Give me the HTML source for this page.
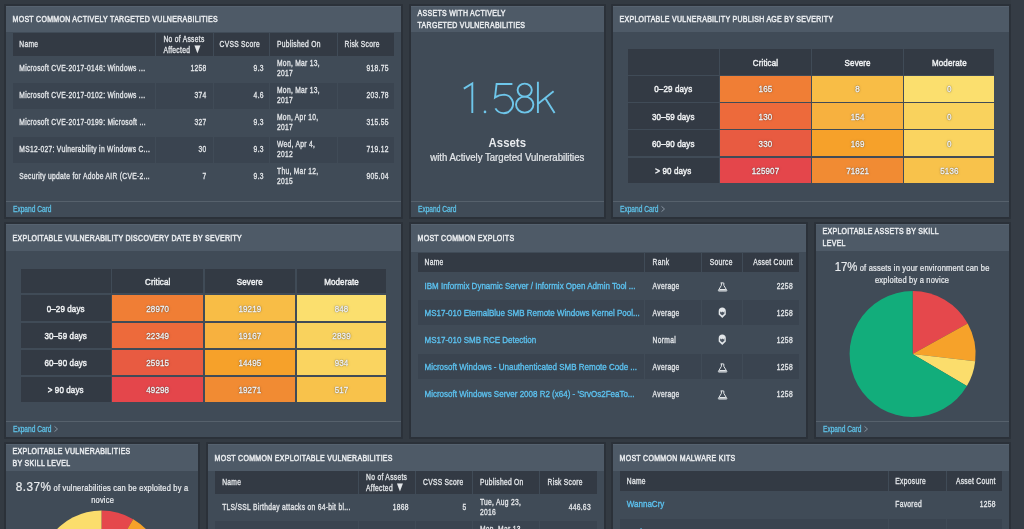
<!DOCTYPE html>
<html><head><meta charset="utf-8"><style>
html,body{margin:0;padding:0;}
body{width:1024px;height:529px;overflow:hidden;position:relative;background:#333a42;font-family:"Liberation Sans",sans-serif;}
#w{position:absolute;left:0;top:0;width:1024px;height:529px;overflow:hidden;background:#333a42;filter:blur(0.4px);}
#w>div{position:absolute;box-sizing:border-box;}
.t{white-space:nowrap;}
</style></head><body><div id="w">
<div style="left:1011px;top:0;width:13px;height:529px;background:#353c45"></div>
<div style="left:4px;top:4px;width:399px;height:215px;background:#2b3139;border-radius:1px"></div><div style="left:6px;top:6px;width:395px;height:211px;background:#404b57"></div><div style="left:6px;top:6px;width:395px;height:25.8px;background:#4e5a67"></div><div style="left:6px;top:6px;width:395px;height:1px;background:#56626f"></div><div class="t" style="left:12.5px;top:14.93px;font-size:7.0px;line-height:8.75px;font-weight:normal;color:#e8ebee;letter-spacing:0.3px;transform:scaleY(1.32);-webkit-text-stroke:0.4px #e8ebee;">MOST COMMON ACTIVELY TARGETED VULNERABILITIES</div><div style="left:6px;top:201px;width:395px;height:1px;background:#56616c"></div><div class="t" style="left:13px;top:206.18px;font-size:6.6px;line-height:8.25px;font-weight:normal;color:#5ec0e6;transform:scaleY(1.25);-webkit-text-stroke:0.25px #5ec0e6;">Expand Card</div><div style="left:409px;top:4px;width:197px;height:215px;background:#2b3139;border-radius:1px"></div><div style="left:411px;top:6px;width:193px;height:211px;background:#404b57"></div><div style="left:411px;top:6px;width:193px;height:25.8px;background:#4e5a67"></div><div style="left:411px;top:6px;width:193px;height:1px;background:#56626f"></div><div class="t" style="left:417.5px;top:9.32px;font-size:7.0px;line-height:8.75px;font-weight:normal;color:#e8ebee;letter-spacing:0.3px;transform:scaleY(1.32);-webkit-text-stroke:0.4px #e8ebee;">ASSETS WITH ACTIVELY</div><div class="t" style="left:417.5px;top:20.52px;font-size:7.0px;line-height:8.75px;font-weight:normal;color:#e8ebee;letter-spacing:0.3px;transform:scaleY(1.32);-webkit-text-stroke:0.4px #e8ebee;">TARGETED VULNERABILITIES</div><div style="left:411px;top:201px;width:193px;height:1px;background:#56616c"></div><div class="t" style="left:418px;top:206.18px;font-size:6.6px;line-height:8.25px;font-weight:normal;color:#5ec0e6;transform:scaleY(1.25);-webkit-text-stroke:0.25px #5ec0e6;">Expand Card</div><div style="left:611px;top:4px;width:400px;height:215px;background:#2b3139;border-radius:1px"></div><div style="left:613px;top:6px;width:396px;height:211px;background:#404b57"></div><div style="left:613px;top:6px;width:396px;height:25.8px;background:#4e5a67"></div><div style="left:613px;top:6px;width:396px;height:1px;background:#56626f"></div><div class="t" style="left:619.5px;top:14.93px;font-size:7.0px;line-height:8.75px;font-weight:normal;color:#e8ebee;letter-spacing:0.3px;transform:scaleY(1.32);-webkit-text-stroke:0.4px #e8ebee;">EXPLOITABLE VULNERABILITY PUBLISH AGE BY SEVERITY</div><div style="left:613px;top:201px;width:396px;height:1px;background:#56616c"></div><div class="t" style="left:620px;top:206.18px;font-size:6.6px;line-height:8.25px;font-weight:normal;color:#5ec0e6;transform:scaleY(1.25);-webkit-text-stroke:0.25px #5ec0e6;">Expand Card</div><svg width="1024" height="529" style="position:absolute;left:0;top:0"><path d="M661.5,206.4 L664.5,209 L661.5,211.6" fill="none" stroke="#8d9aa6" stroke-width="0.9"/></svg><div style="left:4px;top:222px;width:399px;height:217px;background:#2b3139;border-radius:1px"></div><div style="left:6px;top:224px;width:395px;height:213px;background:#404b57"></div><div style="left:6px;top:224px;width:395px;height:27px;background:#4e5a67"></div><div style="left:6px;top:224px;width:395px;height:1px;background:#56626f"></div><div class="t" style="left:12.5px;top:234.43px;font-size:7.0px;line-height:8.75px;font-weight:normal;color:#e8ebee;letter-spacing:0.3px;transform:scaleY(1.32);-webkit-text-stroke:0.4px #e8ebee;">EXPLOITABLE VULNERABILITY DISCOVERY DATE BY SEVERITY</div><div style="left:6px;top:421px;width:395px;height:1px;background:#56616c"></div><div class="t" style="left:13px;top:426.18px;font-size:6.6px;line-height:8.25px;font-weight:normal;color:#5ec0e6;transform:scaleY(1.25);-webkit-text-stroke:0.25px #5ec0e6;">Expand Card</div><svg width="1024" height="529" style="position:absolute;left:0;top:0"><path d="M54.5,426.4 L57.5,429 L54.5,431.6" fill="none" stroke="#8d9aa6" stroke-width="0.9"/></svg><div style="left:409px;top:222px;width:399px;height:217px;background:#2b3139;border-radius:1px"></div><div style="left:411px;top:224px;width:395px;height:213px;background:#404b57"></div><div style="left:411px;top:224px;width:395px;height:28px;background:#4e5a67"></div><div style="left:411px;top:224px;width:395px;height:1px;background:#56626f"></div><div class="t" style="left:417.5px;top:233.62px;font-size:7.0px;line-height:8.75px;font-weight:normal;color:#e8ebee;letter-spacing:0.3px;transform:scaleY(1.32);-webkit-text-stroke:0.4px #e8ebee;">MOST COMMON EXPLOITS</div><div style="left:814px;top:222px;width:197px;height:217px;background:#2b3139;border-radius:1px"></div><div style="left:816px;top:224px;width:193px;height:213px;background:#404b57"></div><div style="left:816px;top:224px;width:193px;height:27px;background:#4e5a67"></div><div style="left:816px;top:224px;width:193px;height:1px;background:#56626f"></div><div class="t" style="left:822.5px;top:227.32px;font-size:7.0px;line-height:8.75px;font-weight:normal;color:#e8ebee;letter-spacing:0.3px;transform:scaleY(1.32);-webkit-text-stroke:0.4px #e8ebee;">EXPLOITABLE ASSETS BY SKILL</div><div class="t" style="left:822.5px;top:238.53px;font-size:7.0px;line-height:8.75px;font-weight:normal;color:#e8ebee;letter-spacing:0.3px;transform:scaleY(1.32);-webkit-text-stroke:0.4px #e8ebee;">LEVEL</div><div style="left:816px;top:421px;width:193px;height:1px;background:#56616c"></div><div class="t" style="left:823px;top:426.18px;font-size:6.6px;line-height:8.25px;font-weight:normal;color:#5ec0e6;transform:scaleY(1.25);-webkit-text-stroke:0.25px #5ec0e6;">Expand Card</div><svg width="1024" height="529" style="position:absolute;left:0;top:0"><path d="M864.5,426.4 L867.5,429 L864.5,431.6" fill="none" stroke="#8d9aa6" stroke-width="0.9"/></svg><div style="left:4px;top:442px;width:196px;height:120px;background:#2b3139;border-radius:1px"></div><div style="left:6px;top:444px;width:192px;height:116px;background:#404b57"></div><div style="left:6px;top:444px;width:192px;height:27px;background:#4e5a67"></div><div style="left:6px;top:444px;width:192px;height:1px;background:#56626f"></div><div class="t" style="left:12.5px;top:447.32px;font-size:7.0px;line-height:8.75px;font-weight:normal;color:#e8ebee;letter-spacing:0.3px;transform:scaleY(1.32);-webkit-text-stroke:0.4px #e8ebee;">EXPLOITABLE VULNERABILITIES</div><div class="t" style="left:12.5px;top:458.52px;font-size:7.0px;line-height:8.75px;font-weight:normal;color:#e8ebee;letter-spacing:0.3px;transform:scaleY(1.32);-webkit-text-stroke:0.4px #e8ebee;">BY SKILL LEVEL</div><div style="left:206px;top:442px;width:400px;height:120px;background:#2b3139;border-radius:1px"></div><div style="left:208px;top:444px;width:396px;height:116px;background:#404b57"></div><div style="left:208px;top:444px;width:396px;height:27px;background:#4e5a67"></div><div style="left:208px;top:444px;width:396px;height:1px;background:#56626f"></div><div class="t" style="left:214.5px;top:454.43px;font-size:7.0px;line-height:8.75px;font-weight:normal;color:#e8ebee;letter-spacing:0.3px;transform:scaleY(1.32);-webkit-text-stroke:0.4px #e8ebee;">MOST COMMON EXPLOITABLE VULNERABILITIES</div><div style="left:611px;top:442px;width:400px;height:120px;background:#2b3139;border-radius:1px"></div><div style="left:613px;top:444px;width:396px;height:116px;background:#404b57"></div><div style="left:613px;top:444px;width:396px;height:27px;background:#4e5a67"></div><div style="left:613px;top:444px;width:396px;height:1px;background:#56626f"></div><div class="t" style="left:619.5px;top:454.43px;font-size:7.0px;line-height:8.75px;font-weight:normal;color:#e8ebee;letter-spacing:0.3px;transform:scaleY(1.32);-webkit-text-stroke:0.4px #e8ebee;">MOST COMMON MALWARE KITS</div><div style="left:12.5px;top:33px;width:142.5px;height:22.5px;background:#333a44"></div><div style="left:156px;top:33px;width:57px;height:22.5px;background:#333a44"></div><div style="left:214px;top:33px;width:54.5px;height:22.5px;background:#333a44"></div><div style="left:269.5px;top:33px;width:67.0px;height:22.5px;background:#333a44"></div><div style="left:337.5px;top:33px;width:56.5px;height:22.5px;background:#333a44"></div><div style="left:12.5px;top:83.3px;width:142.5px;height:25.4px;background:#3a4450"></div><div style="left:156px;top:83.3px;width:57px;height:25.4px;background:#3a4450"></div><div style="left:214px;top:83.3px;width:54.5px;height:25.4px;background:#3a4450"></div><div style="left:269.5px;top:83.3px;width:67.0px;height:25.4px;background:#3a4450"></div><div style="left:337.5px;top:83.3px;width:56.5px;height:25.4px;background:#3a4450"></div><div style="left:12.5px;top:137.3px;width:142.5px;height:25.4px;background:#3a4450"></div><div style="left:156px;top:137.3px;width:57px;height:25.4px;background:#3a4450"></div><div style="left:214px;top:137.3px;width:54.5px;height:25.4px;background:#3a4450"></div><div style="left:269.5px;top:137.3px;width:67.0px;height:25.4px;background:#3a4450"></div><div style="left:337.5px;top:137.3px;width:56.5px;height:25.4px;background:#3a4450"></div><div class="t" style="left:19.3px;top:40.11px;font-size:6.7px;line-height:8.38px;font-weight:normal;color:#e4e7ea;letter-spacing:0.3px;transform:scaleY(1.3);-webkit-text-stroke:0.25px #e4e7ea;">Name</div><div class="t" style="left:163.4px;top:35.01px;font-size:6.7px;line-height:8.38px;font-weight:normal;color:#e4e7ea;letter-spacing:0.3px;transform:scaleY(1.3);-webkit-text-stroke:0.25px #e4e7ea;">No of Assets</div><div class="t" style="left:163.4px;top:45.01px;font-size:6.7px;line-height:8.38px;font-weight:normal;color:#e4e7ea;letter-spacing:0.3px;transform:scaleY(1.3);-webkit-text-stroke:0.25px #e4e7ea;">Affected <span style="font-size:10px;-webkit-text-stroke:0">&#9660;</span></div><div class="t" style="left:219.5px;top:40.11px;font-size:6.7px;line-height:8.38px;font-weight:normal;color:#e4e7ea;letter-spacing:0.3px;transform:scaleY(1.3);-webkit-text-stroke:0.25px #e4e7ea;">CVSS Score</div><div class="t" style="left:277px;top:40.11px;font-size:6.7px;line-height:8.38px;font-weight:normal;color:#e4e7ea;letter-spacing:0.3px;transform:scaleY(1.3);-webkit-text-stroke:0.25px #e4e7ea;">Published On</div><div class="t" style="left:344.5px;top:40.11px;font-size:6.7px;line-height:8.38px;font-weight:normal;color:#e4e7ea;letter-spacing:0.3px;transform:scaleY(1.3);-webkit-text-stroke:0.25px #e4e7ea;">Risk Score</div><div class="t" style="left:19.3px;top:64.41px;font-size:6.7px;line-height:8.38px;font-weight:normal;color:#e4e7ea;letter-spacing:0.3px;transform:scaleY(1.3);-webkit-text-stroke:0.25px #e4e7ea;">Microsoft CVE-2017-0146: Windows ...</div><div class="t" style="right:817.50px;text-align:right;top:64.41px;font-size:6.7px;line-height:8.38px;font-weight:normal;color:#e4e7ea;letter-spacing:0.3px;transform:scaleY(1.3);-webkit-text-stroke:0.25px #e4e7ea;">1258</div><div class="t" style="right:760.20px;text-align:right;top:64.41px;font-size:6.7px;line-height:8.38px;font-weight:normal;color:#e4e7ea;letter-spacing:0.3px;transform:scaleY(1.3);-webkit-text-stroke:0.25px #e4e7ea;">9.3</div><div class="t" style="left:277px;top:59.41px;font-size:6.7px;line-height:8.38px;font-weight:normal;color:#e4e7ea;letter-spacing:0.3px;transform:scaleY(1.3);-webkit-text-stroke:0.25px #e4e7ea;">Mon, Mar 13,</div><div class="t" style="left:277px;top:69.41px;font-size:6.7px;line-height:8.38px;font-weight:normal;color:#e4e7ea;letter-spacing:0.3px;transform:scaleY(1.3);-webkit-text-stroke:0.25px #e4e7ea;">2017</div><div class="t" style="right:635.20px;text-align:right;top:64.41px;font-size:6.7px;line-height:8.38px;font-weight:normal;color:#e4e7ea;letter-spacing:0.3px;transform:scaleY(1.3);-webkit-text-stroke:0.25px #e4e7ea;">918.75</div><div class="t" style="left:19.3px;top:91.41px;font-size:6.7px;line-height:8.38px;font-weight:normal;color:#e4e7ea;letter-spacing:0.3px;transform:scaleY(1.3);-webkit-text-stroke:0.25px #e4e7ea;">Microsoft CVE-2017-0102: Windows ...</div><div class="t" style="right:817.50px;text-align:right;top:91.41px;font-size:6.7px;line-height:8.38px;font-weight:normal;color:#e4e7ea;letter-spacing:0.3px;transform:scaleY(1.3);-webkit-text-stroke:0.25px #e4e7ea;">374</div><div class="t" style="right:760.20px;text-align:right;top:91.41px;font-size:6.7px;line-height:8.38px;font-weight:normal;color:#e4e7ea;letter-spacing:0.3px;transform:scaleY(1.3);-webkit-text-stroke:0.25px #e4e7ea;">4.6</div><div class="t" style="left:277px;top:86.41px;font-size:6.7px;line-height:8.38px;font-weight:normal;color:#e4e7ea;letter-spacing:0.3px;transform:scaleY(1.3);-webkit-text-stroke:0.25px #e4e7ea;">Mon, Mar 13,</div><div class="t" style="left:277px;top:96.41px;font-size:6.7px;line-height:8.38px;font-weight:normal;color:#e4e7ea;letter-spacing:0.3px;transform:scaleY(1.3);-webkit-text-stroke:0.25px #e4e7ea;">2017</div><div class="t" style="right:635.20px;text-align:right;top:91.41px;font-size:6.7px;line-height:8.38px;font-weight:normal;color:#e4e7ea;letter-spacing:0.3px;transform:scaleY(1.3);-webkit-text-stroke:0.25px #e4e7ea;">203.78</div><div class="t" style="left:19.3px;top:118.41px;font-size:6.7px;line-height:8.38px;font-weight:normal;color:#e4e7ea;letter-spacing:0.3px;transform:scaleY(1.3);-webkit-text-stroke:0.25px #e4e7ea;">Microsoft CVE-2017-0199: Microsoft ...</div><div class="t" style="right:817.50px;text-align:right;top:118.41px;font-size:6.7px;line-height:8.38px;font-weight:normal;color:#e4e7ea;letter-spacing:0.3px;transform:scaleY(1.3);-webkit-text-stroke:0.25px #e4e7ea;">327</div><div class="t" style="right:760.20px;text-align:right;top:118.41px;font-size:6.7px;line-height:8.38px;font-weight:normal;color:#e4e7ea;letter-spacing:0.3px;transform:scaleY(1.3);-webkit-text-stroke:0.25px #e4e7ea;">9.3</div><div class="t" style="left:277px;top:113.41px;font-size:6.7px;line-height:8.38px;font-weight:normal;color:#e4e7ea;letter-spacing:0.3px;transform:scaleY(1.3);-webkit-text-stroke:0.25px #e4e7ea;">Mon, Apr 10,</div><div class="t" style="left:277px;top:123.41px;font-size:6.7px;line-height:8.38px;font-weight:normal;color:#e4e7ea;letter-spacing:0.3px;transform:scaleY(1.3);-webkit-text-stroke:0.25px #e4e7ea;">2017</div><div class="t" style="right:635.20px;text-align:right;top:118.41px;font-size:6.7px;line-height:8.38px;font-weight:normal;color:#e4e7ea;letter-spacing:0.3px;transform:scaleY(1.3);-webkit-text-stroke:0.25px #e4e7ea;">315.55</div><div class="t" style="left:19.3px;top:145.41px;font-size:6.7px;line-height:8.38px;font-weight:normal;color:#e4e7ea;letter-spacing:0.3px;transform:scaleY(1.3);-webkit-text-stroke:0.25px #e4e7ea;">MS12-027: Vulnerability in Windows C...</div><div class="t" style="right:817.50px;text-align:right;top:145.41px;font-size:6.7px;line-height:8.38px;font-weight:normal;color:#e4e7ea;letter-spacing:0.3px;transform:scaleY(1.3);-webkit-text-stroke:0.25px #e4e7ea;">30</div><div class="t" style="right:760.20px;text-align:right;top:145.41px;font-size:6.7px;line-height:8.38px;font-weight:normal;color:#e4e7ea;letter-spacing:0.3px;transform:scaleY(1.3);-webkit-text-stroke:0.25px #e4e7ea;">9.3</div><div class="t" style="left:277px;top:140.41px;font-size:6.7px;line-height:8.38px;font-weight:normal;color:#e4e7ea;letter-spacing:0.3px;transform:scaleY(1.3);-webkit-text-stroke:0.25px #e4e7ea;">Wed, Apr 4,</div><div class="t" style="left:277px;top:150.41px;font-size:6.7px;line-height:8.38px;font-weight:normal;color:#e4e7ea;letter-spacing:0.3px;transform:scaleY(1.3);-webkit-text-stroke:0.25px #e4e7ea;">2012</div><div class="t" style="right:635.20px;text-align:right;top:145.41px;font-size:6.7px;line-height:8.38px;font-weight:normal;color:#e4e7ea;letter-spacing:0.3px;transform:scaleY(1.3);-webkit-text-stroke:0.25px #e4e7ea;">719.12</div><div class="t" style="left:19.3px;top:172.41px;font-size:6.7px;line-height:8.38px;font-weight:normal;color:#e4e7ea;letter-spacing:0.3px;transform:scaleY(1.3);-webkit-text-stroke:0.25px #e4e7ea;">Security update for Adobe AIR (CVE-2...</div><div class="t" style="right:817.50px;text-align:right;top:172.41px;font-size:6.7px;line-height:8.38px;font-weight:normal;color:#e4e7ea;letter-spacing:0.3px;transform:scaleY(1.3);-webkit-text-stroke:0.25px #e4e7ea;">7</div><div class="t" style="right:760.20px;text-align:right;top:172.41px;font-size:6.7px;line-height:8.38px;font-weight:normal;color:#e4e7ea;letter-spacing:0.3px;transform:scaleY(1.3);-webkit-text-stroke:0.25px #e4e7ea;">9.3</div><div class="t" style="left:277px;top:167.41px;font-size:6.7px;line-height:8.38px;font-weight:normal;color:#e4e7ea;letter-spacing:0.3px;transform:scaleY(1.3);-webkit-text-stroke:0.25px #e4e7ea;">Thu, Mar 12,</div><div class="t" style="left:277px;top:177.41px;font-size:6.7px;line-height:8.38px;font-weight:normal;color:#e4e7ea;letter-spacing:0.3px;transform:scaleY(1.3);-webkit-text-stroke:0.25px #e4e7ea;">2015</div><div class="t" style="right:635.20px;text-align:right;top:172.41px;font-size:6.7px;line-height:8.38px;font-weight:normal;color:#e4e7ea;letter-spacing:0.3px;transform:scaleY(1.3);-webkit-text-stroke:0.25px #e4e7ea;">905.04</div><svg width="1024" height="529" style="position:absolute;left:0;top:0" fill="none" stroke="#6ec6ea" stroke-width="1.9" stroke-linecap="butt"><path d="M463.8,88.6 L472.3,83.4 V113.1"/><circle cx="485" cy="111.9" r="1.3" fill="#6ec6ea" stroke="none"/><path d="M512.4,84 H496.6 L495,97.4 Q499,94.6 504.3,94.6 A9.4,9.3 0 1 1 495.4,108.4"/><ellipse cx="524.7" cy="90.1" rx="7.1" ry="6.5"/><ellipse cx="524.7" cy="104.6" rx="8.7" ry="8"/><path d="M537.9,81.7 V113.1 M553.6,91.2 L538.4,103.6 M545.0,97.8 L554.6,113.1"/></svg><div class="t" style="left:357.30px;width:300px;text-align:center;top:136.38px;font-size:11.4px;line-height:14.25px;font-weight:bold;color:#e8ebee;transform:scaleY(1.05);">Assets</div><div class="t" style="left:357.30px;width:300px;text-align:center;top:152.40px;font-size:9.6px;line-height:12.00px;font-weight:normal;color:#e4e7ea;transform:scaleY(1.08);-webkit-text-stroke:0.2px #e4e7ea;">with Actively Targeted Vulnerabilities</div><div style="left:628px;top:48.5px;width:90.5px;height:26.1px;background:#333a44"></div><div style="left:720.1px;top:48.5px;width:90.69999999999996px;height:26.1px;background:#333a44"></div><div class="t" style="left:615.51px;width:300px;text-align:center;top:58.75px;font-size:8.0px;line-height:10.00px;font-weight:normal;color:#eef0f2;letter-spacing:0.12px;transform:scaleY(1.2);-webkit-text-stroke:0.4px #eef0f2;">Critical</div><div style="left:812.4px;top:48.5px;width:90.4px;height:26.1px;background:#333a44"></div><div class="t" style="left:707.66px;width:300px;text-align:center;top:58.75px;font-size:8.0px;line-height:10.00px;font-weight:normal;color:#eef0f2;letter-spacing:0.12px;transform:scaleY(1.2);-webkit-text-stroke:0.4px #eef0f2;">Severe</div><div style="left:904.4px;top:48.5px;width:89.9px;height:26.1px;background:#333a44"></div><div class="t" style="left:799.41px;width:300px;text-align:center;top:58.75px;font-size:8.0px;line-height:10.00px;font-weight:normal;color:#eef0f2;letter-spacing:0.12px;transform:scaleY(1.2);-webkit-text-stroke:0.4px #eef0f2;">Moderate</div><div style="left:628px;top:76.0px;width:90.5px;height:25.5px;background:#333a44"></div><div class="t" style="left:523.31px;width:300px;text-align:center;top:85.35px;font-size:8.0px;line-height:10.00px;font-weight:normal;color:#eef0f2;letter-spacing:0.12px;transform:scaleY(1.2);-webkit-text-stroke:0.4px #eef0f2;">0–29 days</div><div style="left:720.1px;top:76.0px;width:90.69999999999996px;height:25.5px;background:#f07e35"></div><div class="t" style="left:615.52px;width:300px;text-align:center;top:85.35px;font-size:8.0px;line-height:10.00px;font-weight:normal;color:#f7f7f7;letter-spacing:0.15px;text-shadow:0 0 1px rgba(30,30,30,.9),0 0 2px rgba(60,60,60,.6);transform:scaleY(1.2);-webkit-text-stroke:0.25px #f7f7f7;">165</div><div style="left:812.4px;top:76.0px;width:90.4px;height:25.5px;background:#f8bd46"></div><div class="t" style="left:707.67px;width:300px;text-align:center;top:85.35px;font-size:8.0px;line-height:10.00px;font-weight:normal;color:#f7f7f7;letter-spacing:0.15px;text-shadow:0 0 1px rgba(30,30,30,.9),0 0 2px rgba(60,60,60,.6);transform:scaleY(1.2);-webkit-text-stroke:0.25px #f7f7f7;">8</div><div style="left:904.4px;top:76.0px;width:89.9px;height:25.5px;background:#fbdf6e"></div><div class="t" style="left:799.42px;width:300px;text-align:center;top:85.35px;font-size:8.0px;line-height:10.00px;font-weight:normal;color:#f7f7f7;letter-spacing:0.15px;text-shadow:0 0 1px rgba(30,30,30,.9),0 0 2px rgba(60,60,60,.6);transform:scaleY(1.2);-webkit-text-stroke:0.25px #f7f7f7;">0</div><div style="left:628px;top:103.2px;width:90.5px;height:25.5px;background:#333a44"></div><div class="t" style="left:523.31px;width:300px;text-align:center;top:112.55px;font-size:8.0px;line-height:10.00px;font-weight:normal;color:#eef0f2;letter-spacing:0.12px;transform:scaleY(1.2);-webkit-text-stroke:0.4px #eef0f2;">30–59 days</div><div style="left:720.1px;top:103.2px;width:90.69999999999996px;height:25.5px;background:#ed6a3b"></div><div class="t" style="left:615.52px;width:300px;text-align:center;top:112.55px;font-size:8.0px;line-height:10.00px;font-weight:normal;color:#f7f7f7;letter-spacing:0.15px;text-shadow:0 0 1px rgba(30,30,30,.9),0 0 2px rgba(60,60,60,.6);transform:scaleY(1.2);-webkit-text-stroke:0.25px #f7f7f7;">130</div><div style="left:812.4px;top:103.2px;width:90.4px;height:25.5px;background:#f7b13f"></div><div class="t" style="left:707.67px;width:300px;text-align:center;top:112.55px;font-size:8.0px;line-height:10.00px;font-weight:normal;color:#f7f7f7;letter-spacing:0.15px;text-shadow:0 0 1px rgba(30,30,30,.9),0 0 2px rgba(60,60,60,.6);transform:scaleY(1.2);-webkit-text-stroke:0.25px #f7f7f7;">154</div><div style="left:904.4px;top:103.2px;width:89.9px;height:25.5px;background:#f9d25d"></div><div class="t" style="left:799.42px;width:300px;text-align:center;top:112.55px;font-size:8.0px;line-height:10.00px;font-weight:normal;color:#f7f7f7;letter-spacing:0.15px;text-shadow:0 0 1px rgba(30,30,30,.9),0 0 2px rgba(60,60,60,.6);transform:scaleY(1.2);-webkit-text-stroke:0.25px #f7f7f7;">0</div><div style="left:628px;top:130.4px;width:90.5px;height:25.5px;background:#333a44"></div><div class="t" style="left:523.31px;width:300px;text-align:center;top:139.75px;font-size:8.0px;line-height:10.00px;font-weight:normal;color:#eef0f2;letter-spacing:0.12px;transform:scaleY(1.2);-webkit-text-stroke:0.4px #eef0f2;">60–90 days</div><div style="left:720.1px;top:130.4px;width:90.69999999999996px;height:25.5px;background:#e85b41"></div><div class="t" style="left:615.52px;width:300px;text-align:center;top:139.75px;font-size:8.0px;line-height:10.00px;font-weight:normal;color:#f7f7f7;letter-spacing:0.15px;text-shadow:0 0 1px rgba(30,30,30,.9),0 0 2px rgba(60,60,60,.6);transform:scaleY(1.2);-webkit-text-stroke:0.25px #f7f7f7;">330</div><div style="left:812.4px;top:130.4px;width:90.4px;height:25.5px;background:#f6a12a"></div><div class="t" style="left:707.67px;width:300px;text-align:center;top:139.75px;font-size:8.0px;line-height:10.00px;font-weight:normal;color:#f7f7f7;letter-spacing:0.15px;text-shadow:0 0 1px rgba(30,30,30,.9),0 0 2px rgba(60,60,60,.6);transform:scaleY(1.2);-webkit-text-stroke:0.25px #f7f7f7;">169</div><div style="left:904.4px;top:130.4px;width:89.9px;height:25.5px;background:#fad460"></div><div class="t" style="left:799.42px;width:300px;text-align:center;top:139.75px;font-size:8.0px;line-height:10.00px;font-weight:normal;color:#f7f7f7;letter-spacing:0.15px;text-shadow:0 0 1px rgba(30,30,30,.9),0 0 2px rgba(60,60,60,.6);transform:scaleY(1.2);-webkit-text-stroke:0.25px #f7f7f7;">0</div><div style="left:628px;top:157.6px;width:90.5px;height:25.5px;background:#333a44"></div><div class="t" style="left:523.31px;width:300px;text-align:center;top:166.95px;font-size:8.0px;line-height:10.00px;font-weight:normal;color:#eef0f2;letter-spacing:0.12px;transform:scaleY(1.2);-webkit-text-stroke:0.4px #eef0f2;">&gt; 90 days</div><div style="left:720.1px;top:157.6px;width:90.69999999999996px;height:25.5px;background:#e4464b"></div><div class="t" style="left:615.52px;width:300px;text-align:center;top:166.95px;font-size:8.0px;line-height:10.00px;font-weight:normal;color:#f7f7f7;letter-spacing:0.15px;text-shadow:0 0 1px rgba(30,30,30,.9),0 0 2px rgba(60,60,60,.6);transform:scaleY(1.2);-webkit-text-stroke:0.25px #f7f7f7;">125907</div><div style="left:812.4px;top:157.6px;width:90.4px;height:25.5px;background:#f18b33"></div><div class="t" style="left:707.67px;width:300px;text-align:center;top:166.95px;font-size:8.0px;line-height:10.00px;font-weight:normal;color:#f7f7f7;letter-spacing:0.15px;text-shadow:0 0 1px rgba(30,30,30,.9),0 0 2px rgba(60,60,60,.6);transform:scaleY(1.2);-webkit-text-stroke:0.25px #f7f7f7;">71821</div><div style="left:904.4px;top:157.6px;width:89.9px;height:25.5px;background:#f8c24b"></div><div class="t" style="left:799.42px;width:300px;text-align:center;top:166.95px;font-size:8.0px;line-height:10.00px;font-weight:normal;color:#f7f7f7;letter-spacing:0.15px;text-shadow:0 0 1px rgba(30,30,30,.9),0 0 2px rgba(60,60,60,.6);transform:scaleY(1.2);-webkit-text-stroke:0.25px #f7f7f7;">5136</div><div style="left:20.5px;top:268.5px;width:90.2px;height:24.5px;background:#333a44"></div><div style="left:112.3px;top:268.5px;width:90.7px;height:24.5px;background:#333a44"></div><div class="t" style="left:7.71px;width:300px;text-align:center;top:277.95px;font-size:8.0px;line-height:10.00px;font-weight:normal;color:#eef0f2;letter-spacing:0.12px;transform:scaleY(1.2);-webkit-text-stroke:0.4px #eef0f2;">Critical</div><div style="left:204.6px;top:268.5px;width:90.4px;height:24.5px;background:#333a44"></div><div class="t" style="left:99.86px;width:300px;text-align:center;top:277.95px;font-size:8.0px;line-height:10.00px;font-weight:normal;color:#eef0f2;letter-spacing:0.12px;transform:scaleY(1.2);-webkit-text-stroke:0.4px #eef0f2;">Severe</div><div style="left:296.6px;top:268.5px;width:89.79999999999998px;height:24.5px;background:#333a44"></div><div class="t" style="left:191.56px;width:300px;text-align:center;top:277.95px;font-size:8.0px;line-height:10.00px;font-weight:normal;color:#eef0f2;letter-spacing:0.12px;transform:scaleY(1.2);-webkit-text-stroke:0.4px #eef0f2;">Moderate</div><div style="left:20.5px;top:295.4px;width:90.2px;height:25.4px;background:#333a44"></div><div class="t" style="left:-84.34px;width:300px;text-align:center;top:304.70px;font-size:8.0px;line-height:10.00px;font-weight:normal;color:#eef0f2;letter-spacing:0.12px;transform:scaleY(1.2);-webkit-text-stroke:0.4px #eef0f2;">0–29 days</div><div style="left:112.3px;top:295.4px;width:90.7px;height:25.4px;background:#f07e35"></div><div class="t" style="left:7.73px;width:300px;text-align:center;top:304.70px;font-size:8.0px;line-height:10.00px;font-weight:normal;color:#f7f7f7;letter-spacing:0.15px;text-shadow:0 0 1px rgba(30,30,30,.9),0 0 2px rgba(60,60,60,.6);transform:scaleY(1.2);-webkit-text-stroke:0.25px #f7f7f7;">28970</div><div style="left:204.6px;top:295.4px;width:90.4px;height:25.4px;background:#f8bd46"></div><div class="t" style="left:99.88px;width:300px;text-align:center;top:304.70px;font-size:8.0px;line-height:10.00px;font-weight:normal;color:#f7f7f7;letter-spacing:0.15px;text-shadow:0 0 1px rgba(30,30,30,.9),0 0 2px rgba(60,60,60,.6);transform:scaleY(1.2);-webkit-text-stroke:0.25px #f7f7f7;">19219</div><div style="left:296.6px;top:295.4px;width:89.79999999999998px;height:25.4px;background:#fbdf6e"></div><div class="t" style="left:191.57px;width:300px;text-align:center;top:304.70px;font-size:8.0px;line-height:10.00px;font-weight:normal;color:#f7f7f7;letter-spacing:0.15px;text-shadow:0 0 1px rgba(30,30,30,.9),0 0 2px rgba(60,60,60,.6);transform:scaleY(1.2);-webkit-text-stroke:0.25px #f7f7f7;">848</div><div style="left:20.5px;top:322.5px;width:90.2px;height:25.4px;background:#333a44"></div><div class="t" style="left:-84.34px;width:300px;text-align:center;top:331.80px;font-size:8.0px;line-height:10.00px;font-weight:normal;color:#eef0f2;letter-spacing:0.12px;transform:scaleY(1.2);-webkit-text-stroke:0.4px #eef0f2;">30–59 days</div><div style="left:112.3px;top:322.5px;width:90.7px;height:25.4px;background:#ed6a3b"></div><div class="t" style="left:7.73px;width:300px;text-align:center;top:331.80px;font-size:8.0px;line-height:10.00px;font-weight:normal;color:#f7f7f7;letter-spacing:0.15px;text-shadow:0 0 1px rgba(30,30,30,.9),0 0 2px rgba(60,60,60,.6);transform:scaleY(1.2);-webkit-text-stroke:0.25px #f7f7f7;">22349</div><div style="left:204.6px;top:322.5px;width:90.4px;height:25.4px;background:#f7b13f"></div><div class="t" style="left:99.88px;width:300px;text-align:center;top:331.80px;font-size:8.0px;line-height:10.00px;font-weight:normal;color:#f7f7f7;letter-spacing:0.15px;text-shadow:0 0 1px rgba(30,30,30,.9),0 0 2px rgba(60,60,60,.6);transform:scaleY(1.2);-webkit-text-stroke:0.25px #f7f7f7;">19167</div><div style="left:296.6px;top:322.5px;width:89.79999999999998px;height:25.4px;background:#f9d25d"></div><div class="t" style="left:191.57px;width:300px;text-align:center;top:331.80px;font-size:8.0px;line-height:10.00px;font-weight:normal;color:#f7f7f7;letter-spacing:0.15px;text-shadow:0 0 1px rgba(30,30,30,.9),0 0 2px rgba(60,60,60,.6);transform:scaleY(1.2);-webkit-text-stroke:0.25px #f7f7f7;">2839</div><div style="left:20.5px;top:349.59999999999997px;width:90.2px;height:25.4px;background:#333a44"></div><div class="t" style="left:-84.34px;width:300px;text-align:center;top:358.90px;font-size:8.0px;line-height:10.00px;font-weight:normal;color:#eef0f2;letter-spacing:0.12px;transform:scaleY(1.2);-webkit-text-stroke:0.4px #eef0f2;">60–90 days</div><div style="left:112.3px;top:349.59999999999997px;width:90.7px;height:25.4px;background:#e85b41"></div><div class="t" style="left:7.73px;width:300px;text-align:center;top:358.90px;font-size:8.0px;line-height:10.00px;font-weight:normal;color:#f7f7f7;letter-spacing:0.15px;text-shadow:0 0 1px rgba(30,30,30,.9),0 0 2px rgba(60,60,60,.6);transform:scaleY(1.2);-webkit-text-stroke:0.25px #f7f7f7;">25915</div><div style="left:204.6px;top:349.59999999999997px;width:90.4px;height:25.4px;background:#f6a12a"></div><div class="t" style="left:99.88px;width:300px;text-align:center;top:358.90px;font-size:8.0px;line-height:10.00px;font-weight:normal;color:#f7f7f7;letter-spacing:0.15px;text-shadow:0 0 1px rgba(30,30,30,.9),0 0 2px rgba(60,60,60,.6);transform:scaleY(1.2);-webkit-text-stroke:0.25px #f7f7f7;">14495</div><div style="left:296.6px;top:349.59999999999997px;width:89.79999999999998px;height:25.4px;background:#fad460"></div><div class="t" style="left:191.57px;width:300px;text-align:center;top:358.90px;font-size:8.0px;line-height:10.00px;font-weight:normal;color:#f7f7f7;letter-spacing:0.15px;text-shadow:0 0 1px rgba(30,30,30,.9),0 0 2px rgba(60,60,60,.6);transform:scaleY(1.2);-webkit-text-stroke:0.25px #f7f7f7;">934</div><div style="left:20.5px;top:376.7px;width:90.2px;height:25.4px;background:#333a44"></div><div class="t" style="left:-84.34px;width:300px;text-align:center;top:386.00px;font-size:8.0px;line-height:10.00px;font-weight:normal;color:#eef0f2;letter-spacing:0.12px;transform:scaleY(1.2);-webkit-text-stroke:0.4px #eef0f2;">&gt; 90 days</div><div style="left:112.3px;top:376.7px;width:90.7px;height:25.4px;background:#e4464b"></div><div class="t" style="left:7.73px;width:300px;text-align:center;top:386.00px;font-size:8.0px;line-height:10.00px;font-weight:normal;color:#f7f7f7;letter-spacing:0.15px;text-shadow:0 0 1px rgba(30,30,30,.9),0 0 2px rgba(60,60,60,.6);transform:scaleY(1.2);-webkit-text-stroke:0.25px #f7f7f7;">49298</div><div style="left:204.6px;top:376.7px;width:90.4px;height:25.4px;background:#f18b33"></div><div class="t" style="left:99.88px;width:300px;text-align:center;top:386.00px;font-size:8.0px;line-height:10.00px;font-weight:normal;color:#f7f7f7;letter-spacing:0.15px;text-shadow:0 0 1px rgba(30,30,30,.9),0 0 2px rgba(60,60,60,.6);transform:scaleY(1.2);-webkit-text-stroke:0.25px #f7f7f7;">19271</div><div style="left:296.6px;top:376.7px;width:89.79999999999998px;height:25.4px;background:#f8c24b"></div><div class="t" style="left:191.57px;width:300px;text-align:center;top:386.00px;font-size:8.0px;line-height:10.00px;font-weight:normal;color:#f7f7f7;letter-spacing:0.15px;text-shadow:0 0 1px rgba(30,30,30,.9),0 0 2px rgba(60,60,60,.6);transform:scaleY(1.2);-webkit-text-stroke:0.25px #f7f7f7;">517</div><div style="left:418.3px;top:252.5px;width:225.7px;height:19.7px;background:#333a44"></div><div style="left:645px;top:252.5px;width:55.799999999999955px;height:19.7px;background:#333a44"></div><div style="left:701.8px;top:252.5px;width:40.0px;height:19.7px;background:#333a44"></div><div style="left:742.8px;top:252.5px;width:56.700000000000045px;height:19.7px;background:#333a44"></div><div style="left:418.3px;top:300.0px;width:225.7px;height:25.4px;background:#3a4450"></div><div style="left:645px;top:300.0px;width:55.799999999999955px;height:25.4px;background:#3a4450"></div><div style="left:701.8px;top:300.0px;width:40.0px;height:25.4px;background:#3a4450"></div><div style="left:742.8px;top:300.0px;width:56.700000000000045px;height:25.4px;background:#3a4450"></div><div style="left:418.3px;top:354.0px;width:225.7px;height:25.4px;background:#3a4450"></div><div style="left:645px;top:354.0px;width:55.799999999999955px;height:25.4px;background:#3a4450"></div><div style="left:701.8px;top:354.0px;width:40.0px;height:25.4px;background:#3a4450"></div><div style="left:742.8px;top:354.0px;width:56.700000000000045px;height:25.4px;background:#3a4450"></div><div class="t" style="left:424.5px;top:258.21px;font-size:6.7px;line-height:8.38px;font-weight:normal;color:#e4e7ea;letter-spacing:0.3px;transform:scaleY(1.3);-webkit-text-stroke:0.25px #e4e7ea;">Name</div><div class="t" style="left:652.6px;top:258.21px;font-size:6.7px;line-height:8.38px;font-weight:normal;color:#e4e7ea;letter-spacing:0.3px;transform:scaleY(1.3);-webkit-text-stroke:0.25px #e4e7ea;">Rank</div><div class="t" style="left:571.25px;width:300px;text-align:center;top:258.21px;font-size:6.7px;line-height:8.38px;font-weight:normal;color:#e4e7ea;letter-spacing:0.3px;transform:scaleY(1.3);-webkit-text-stroke:0.25px #e4e7ea;">Source</div><div class="t" style="right:231.10px;text-align:right;top:258.21px;font-size:6.7px;line-height:8.38px;font-weight:normal;color:#e4e7ea;letter-spacing:0.3px;transform:scaleY(1.3);-webkit-text-stroke:0.25px #e4e7ea;">Asset Count</div><div class="t" style="left:424.5px;top:281.60px;font-size:8.0px;line-height:10.00px;font-weight:normal;color:#5cc2f0;transform:scaleY(1.15);-webkit-text-stroke:0.3px #5cc2f0;">IBM Informix Dynamic Server / Informix Open Admin Tool ...</div><div class="t" style="left:652.6px;top:282.41px;font-size:6.7px;line-height:8.38px;font-weight:normal;color:#e4e7ea;letter-spacing:0.3px;transform:scaleY(1.3);-webkit-text-stroke:0.25px #e4e7ea;">Average</div><div style="left:717px;top:281.1px;width:11px;height:12px"><svg width="11" height="12" viewBox="0 0 11 12" style="position:absolute;left:0;top:0"><path d="M3.6,1.9 H6.6 M4.4,1.9 V4.3 L1.4,9.4 Q1.1,10 1.8,10 H9.4 Q10.1,10 9.8,9.4 L6.8,4.3 V1.9" fill="none" stroke="#e2e6e9" stroke-width="1"/><path d="M2.6,8 H8.6 L9.5,9.6 H1.7 Z" fill="#e2e6e9"/></svg></div><div class="t" style="right:231.10px;text-align:right;top:282.41px;font-size:6.7px;line-height:8.38px;font-weight:normal;color:#e4e7ea;letter-spacing:0.3px;transform:scaleY(1.3);-webkit-text-stroke:0.25px #e4e7ea;">2258</div><div class="t" style="left:424.5px;top:308.60px;font-size:8.0px;line-height:10.00px;font-weight:normal;color:#5cc2f0;transform:scaleY(1.15);-webkit-text-stroke:0.3px #5cc2f0;">MS17-010 EternalBlue SMB Remote Windows Kernel Pool...</div><div class="t" style="left:652.6px;top:309.41px;font-size:6.7px;line-height:8.38px;font-weight:normal;color:#e4e7ea;letter-spacing:0.3px;transform:scaleY(1.3);-webkit-text-stroke:0.25px #e4e7ea;">Average</div><div style="left:717px;top:307.1px;width:11px;height:12px"><svg width="11" height="12" viewBox="0 0 11 12" style="position:absolute;left:0;top:0"><path d="M1.7,4 C1.7,1.8 3.2,0.6 5.25,0.6 C7.3,0.6 8.8,1.8 8.8,4 V7.6 L5.25,10.9 L1.7,7.6 Z" fill="#e2e6e9"/><path d="M3.1,4.2 L4.2,5.6 L5.25,4.6 L6.3,5.6 L7.4,4.2 V6.8 L5.25,8.6 L3.1,6.8 Z" fill="#4a5460"/></svg></div><div class="t" style="right:231.10px;text-align:right;top:309.41px;font-size:6.7px;line-height:8.38px;font-weight:normal;color:#e4e7ea;letter-spacing:0.3px;transform:scaleY(1.3);-webkit-text-stroke:0.25px #e4e7ea;">1258</div><div class="t" style="left:424.5px;top:335.60px;font-size:8.0px;line-height:10.00px;font-weight:normal;color:#5cc2f0;transform:scaleY(1.15);-webkit-text-stroke:0.3px #5cc2f0;">MS17-010 SMB RCE Detection</div><div class="t" style="left:652.6px;top:336.41px;font-size:6.7px;line-height:8.38px;font-weight:normal;color:#e4e7ea;letter-spacing:0.3px;transform:scaleY(1.3);-webkit-text-stroke:0.25px #e4e7ea;">Normal</div><div style="left:717px;top:334.1px;width:11px;height:12px"><svg width="11" height="12" viewBox="0 0 11 12" style="position:absolute;left:0;top:0"><path d="M1.7,4 C1.7,1.8 3.2,0.6 5.25,0.6 C7.3,0.6 8.8,1.8 8.8,4 V7.6 L5.25,10.9 L1.7,7.6 Z" fill="#e2e6e9"/><path d="M3.1,4.2 L4.2,5.6 L5.25,4.6 L6.3,5.6 L7.4,4.2 V6.8 L5.25,8.6 L3.1,6.8 Z" fill="#4a5460"/></svg></div><div class="t" style="right:231.10px;text-align:right;top:336.41px;font-size:6.7px;line-height:8.38px;font-weight:normal;color:#e4e7ea;letter-spacing:0.3px;transform:scaleY(1.3);-webkit-text-stroke:0.25px #e4e7ea;">1258</div><div class="t" style="left:424.5px;top:362.60px;font-size:8.0px;line-height:10.00px;font-weight:normal;color:#5cc2f0;transform:scaleY(1.15);-webkit-text-stroke:0.3px #5cc2f0;">Microsoft Windows - Unauthenticated SMB Remote Code ...</div><div class="t" style="left:652.6px;top:363.41px;font-size:6.7px;line-height:8.38px;font-weight:normal;color:#e4e7ea;letter-spacing:0.3px;transform:scaleY(1.3);-webkit-text-stroke:0.25px #e4e7ea;">Average</div><div style="left:717px;top:362.1px;width:11px;height:12px"><svg width="11" height="12" viewBox="0 0 11 12" style="position:absolute;left:0;top:0"><path d="M3.6,1.9 H6.6 M4.4,1.9 V4.3 L1.4,9.4 Q1.1,10 1.8,10 H9.4 Q10.1,10 9.8,9.4 L6.8,4.3 V1.9" fill="none" stroke="#e2e6e9" stroke-width="1"/><path d="M2.6,8 H8.6 L9.5,9.6 H1.7 Z" fill="#e2e6e9"/></svg></div><div class="t" style="right:231.10px;text-align:right;top:363.41px;font-size:6.7px;line-height:8.38px;font-weight:normal;color:#e4e7ea;letter-spacing:0.3px;transform:scaleY(1.3);-webkit-text-stroke:0.25px #e4e7ea;">1258</div><div class="t" style="left:424.5px;top:389.60px;font-size:8.0px;line-height:10.00px;font-weight:normal;color:#5cc2f0;transform:scaleY(1.15);-webkit-text-stroke:0.3px #5cc2f0;">Microsoft Windows Server 2008 R2 (x64) - 'SrvOs2FeaTo...</div><div class="t" style="left:652.6px;top:390.41px;font-size:6.7px;line-height:8.38px;font-weight:normal;color:#e4e7ea;letter-spacing:0.3px;transform:scaleY(1.3);-webkit-text-stroke:0.25px #e4e7ea;">Average</div><div style="left:717px;top:389.1px;width:11px;height:12px"><svg width="11" height="12" viewBox="0 0 11 12" style="position:absolute;left:0;top:0"><path d="M3.6,1.9 H6.6 M4.4,1.9 V4.3 L1.4,9.4 Q1.1,10 1.8,10 H9.4 Q10.1,10 9.8,9.4 L6.8,4.3 V1.9" fill="none" stroke="#e2e6e9" stroke-width="1"/><path d="M2.6,8 H8.6 L9.5,9.6 H1.7 Z" fill="#e2e6e9"/></svg></div><div class="t" style="right:231.10px;text-align:right;top:390.41px;font-size:6.7px;line-height:8.38px;font-weight:normal;color:#e4e7ea;letter-spacing:0.3px;transform:scaleY(1.3);-webkit-text-stroke:0.25px #e4e7ea;">1258</div><svg width="1024" height="529" style="position:absolute;left:0;top:0"><path d="M912.6,354 L912.60,291.00 A63,63 0 0 1 967.70,323.46 Z" fill="#e5484c"/><path d="M912.6,354 L967.70,323.46 A63,63 0 0 1 975.20,361.13 Z" fill="#f6a22a"/><path d="M912.6,354 L975.20,361.13 A63,63 0 0 1 966.88,385.97 Z" fill="#fbdd6c"/><path d="M912.6,354 L966.88,385.97 A63,63 0 1 1 912.60,291.00 Z" fill="#12ad7b"/></svg><div class="t" style="left:762.10px;width:300px;text-align:center;top:263.01px;font-size:7.5px;line-height:9.38px;font-weight:normal;color:#e8ebee;letter-spacing:0.2px;transform:scaleY(1.12);-webkit-text-stroke:0.2px #e8ebee;"><span style="font-size:11.4px;letter-spacing:0">17%</span> of assets in your environment can be</div><div class="t" style="left:762.10px;width:300px;text-align:center;top:275.81px;font-size:7.5px;line-height:9.38px;font-weight:normal;color:#e8ebee;letter-spacing:0.2px;transform:scaleY(1.12);-webkit-text-stroke:0.2px #e8ebee;">exploited by a novice</div><svg width="1024" height="529" style="position:absolute;left:0;top:0"><path d="M101.5,573 L101.50,510.50 A62.5,62.5 0 0 1 133.22,519.15 Z" fill="#e5484c"/><path d="M101.5,573 L133.22,519.15 A62.5,62.5 0 0 1 160.23,594.38 Z" fill="#f6a22a"/><path d="M101.5,573 L160.23,594.38 A62.5,62.5 0 0 1 42.77,594.38 Z" fill="#12ad7b"/><path d="M101.5,573 L42.77,594.38 A62.5,62.5 0 0 1 101.50,510.50 Z" fill="#fbdd6c"/></svg><div class="t" style="left:-47.90px;width:300px;text-align:center;top:482.81px;font-size:7.5px;line-height:9.38px;font-weight:normal;color:#e8ebee;letter-spacing:0.2px;transform:scaleY(1.12);-webkit-text-stroke:0.2px #e8ebee;"><span style="font-size:11.8px;letter-spacing:0.4px">8.37%</span> of vulnerabilities can be exploited by a</div><div class="t" style="left:-47.40px;width:300px;text-align:center;top:495.71px;font-size:7.5px;line-height:9.38px;font-weight:normal;color:#e8ebee;letter-spacing:0.2px;transform:scaleY(1.12);-webkit-text-stroke:0.2px #e8ebee;">novice</div><div style="left:215.2px;top:471px;width:143.10000000000002px;height:22.8px;background:#333a44"></div><div style="left:359.3px;top:471px;width:56.0px;height:22.8px;background:#333a44"></div><div style="left:416.3px;top:471px;width:55.39999999999998px;height:22.8px;background:#333a44"></div><div style="left:472.7px;top:471px;width:66.69999999999999px;height:22.8px;background:#333a44"></div><div style="left:540.4px;top:471px;width:57.0px;height:22.8px;background:#333a44"></div><div style="left:215.2px;top:521.0999999999999px;width:143.10000000000002px;height:24.9px;background:#3a4450"></div><div style="left:359.3px;top:521.0999999999999px;width:56.0px;height:24.9px;background:#3a4450"></div><div style="left:416.3px;top:521.0999999999999px;width:55.39999999999998px;height:24.9px;background:#3a4450"></div><div style="left:472.7px;top:521.0999999999999px;width:66.69999999999999px;height:24.9px;background:#3a4450"></div><div style="left:540.4px;top:521.0999999999999px;width:57.0px;height:24.9px;background:#3a4450"></div><div class="t" style="left:222.2px;top:478.41px;font-size:6.7px;line-height:8.38px;font-weight:normal;color:#e4e7ea;letter-spacing:0.3px;transform:scaleY(1.3);-webkit-text-stroke:0.25px #e4e7ea;">Name</div><div class="t" style="left:366.1px;top:473.11px;font-size:6.7px;line-height:8.38px;font-weight:normal;color:#e4e7ea;letter-spacing:0.3px;transform:scaleY(1.3);-webkit-text-stroke:0.25px #e4e7ea;">No of Assets</div><div class="t" style="left:366.1px;top:483.21px;font-size:6.7px;line-height:8.38px;font-weight:normal;color:#e4e7ea;letter-spacing:0.3px;transform:scaleY(1.3);-webkit-text-stroke:0.25px #e4e7ea;">Affected <span style="font-size:10px;-webkit-text-stroke:0">&#9660;</span></div><div class="t" style="left:423px;top:478.41px;font-size:6.7px;line-height:8.38px;font-weight:normal;color:#e4e7ea;letter-spacing:0.3px;transform:scaleY(1.3);-webkit-text-stroke:0.25px #e4e7ea;">CVSS Score</div><div class="t" style="left:479.9px;top:478.41px;font-size:6.7px;line-height:8.38px;font-weight:normal;color:#e4e7ea;letter-spacing:0.3px;transform:scaleY(1.3);-webkit-text-stroke:0.25px #e4e7ea;">Published On</div><div class="t" style="left:547.5px;top:478.41px;font-size:6.7px;line-height:8.38px;font-weight:normal;color:#e4e7ea;letter-spacing:0.3px;transform:scaleY(1.3);-webkit-text-stroke:0.25px #e4e7ea;">Risk Score</div><div class="t" style="left:222.2px;top:503.21px;font-size:6.7px;line-height:8.38px;font-weight:normal;color:#e4e7ea;letter-spacing:0.3px;transform:scaleY(1.3);-webkit-text-stroke:0.25px #e4e7ea;">TLS/SSL Birthday attacks on 64-bit bl...</div><div class="t" style="right:615.30px;text-align:right;top:503.21px;font-size:6.7px;line-height:8.38px;font-weight:normal;color:#e4e7ea;letter-spacing:0.3px;transform:scaleY(1.3);-webkit-text-stroke:0.25px #e4e7ea;">1868</div><div class="t" style="right:557.60px;text-align:right;top:503.21px;font-size:6.7px;line-height:8.38px;font-weight:normal;color:#e4e7ea;letter-spacing:0.3px;transform:scaleY(1.3);-webkit-text-stroke:0.25px #e4e7ea;">5</div><div class="t" style="left:479.9px;top:498.21px;font-size:6.7px;line-height:8.38px;font-weight:normal;color:#e4e7ea;letter-spacing:0.3px;transform:scaleY(1.3);-webkit-text-stroke:0.25px #e4e7ea;">Tue, Aug 23,</div><div class="t" style="left:479.9px;top:508.21px;font-size:6.7px;line-height:8.38px;font-weight:normal;color:#e4e7ea;letter-spacing:0.3px;transform:scaleY(1.3);-webkit-text-stroke:0.25px #e4e7ea;">2016</div><div class="t" style="right:433.10px;text-align:right;top:503.21px;font-size:6.7px;line-height:8.38px;font-weight:normal;color:#e4e7ea;letter-spacing:0.3px;transform:scaleY(1.3);-webkit-text-stroke:0.25px #e4e7ea;">446.63</div><div class="t" style="left:479.9px;top:524.81px;font-size:6.7px;line-height:8.38px;font-weight:normal;color:#e4e7ea;letter-spacing:0.3px;transform:scaleY(1.3);-webkit-text-stroke:0.25px #e4e7ea;">Mon, Mar 13,</div><div style="left:620px;top:471px;width:267.6px;height:20.3px;background:#333a44"></div><div style="left:888.6px;top:471px;width:57.0px;height:20.3px;background:#333a44"></div><div style="left:946.6px;top:471px;width:55.39999999999998px;height:20.3px;background:#333a44"></div><div style="left:620px;top:519.0px;width:267.6px;height:25.299999999999997px;background:#3a4450"></div><div style="left:888.6px;top:519.0px;width:57.0px;height:25.299999999999997px;background:#3a4450"></div><div style="left:946.6px;top:519.0px;width:55.39999999999998px;height:25.299999999999997px;background:#3a4450"></div><div class="t" style="left:626.8px;top:476.71px;font-size:6.7px;line-height:8.38px;font-weight:normal;color:#e4e7ea;letter-spacing:0.3px;transform:scaleY(1.3);-webkit-text-stroke:0.25px #e4e7ea;">Name</div><div class="t" style="left:895.3px;top:476.71px;font-size:6.7px;line-height:8.38px;font-weight:normal;color:#e4e7ea;letter-spacing:0.3px;transform:scaleY(1.3);-webkit-text-stroke:0.25px #e4e7ea;">Exposure</div><div class="t" style="right:28.30px;text-align:right;top:476.71px;font-size:6.7px;line-height:8.38px;font-weight:normal;color:#e4e7ea;letter-spacing:0.3px;transform:scaleY(1.3);-webkit-text-stroke:0.25px #e4e7ea;">Asset Count</div><div class="t" style="left:626.8px;top:499.50px;font-size:8.0px;line-height:10.00px;font-weight:normal;color:#5cc2f0;transform:scaleY(1.15);-webkit-text-stroke:0.3px #5cc2f0;">WannaCry</div><div class="t" style="left:895.3px;top:500.31px;font-size:6.7px;line-height:8.38px;font-weight:normal;color:#e4e7ea;letter-spacing:0.3px;transform:scaleY(1.3);-webkit-text-stroke:0.25px #e4e7ea;">Favored</div><div class="t" style="right:28.30px;text-align:right;top:500.31px;font-size:6.7px;line-height:8.38px;font-weight:normal;color:#e4e7ea;letter-spacing:0.3px;transform:scaleY(1.3);-webkit-text-stroke:0.25px #e4e7ea;">1258</div><div class="t" style="left:626.8px;top:527.50px;font-size:8.0px;line-height:10.00px;font-weight:normal;color:#5cc2f0;transform:scaleY(1.1);-webkit-text-stroke:0.2px #5cc2f0;">Mydoom</div>
</div></body></html>
